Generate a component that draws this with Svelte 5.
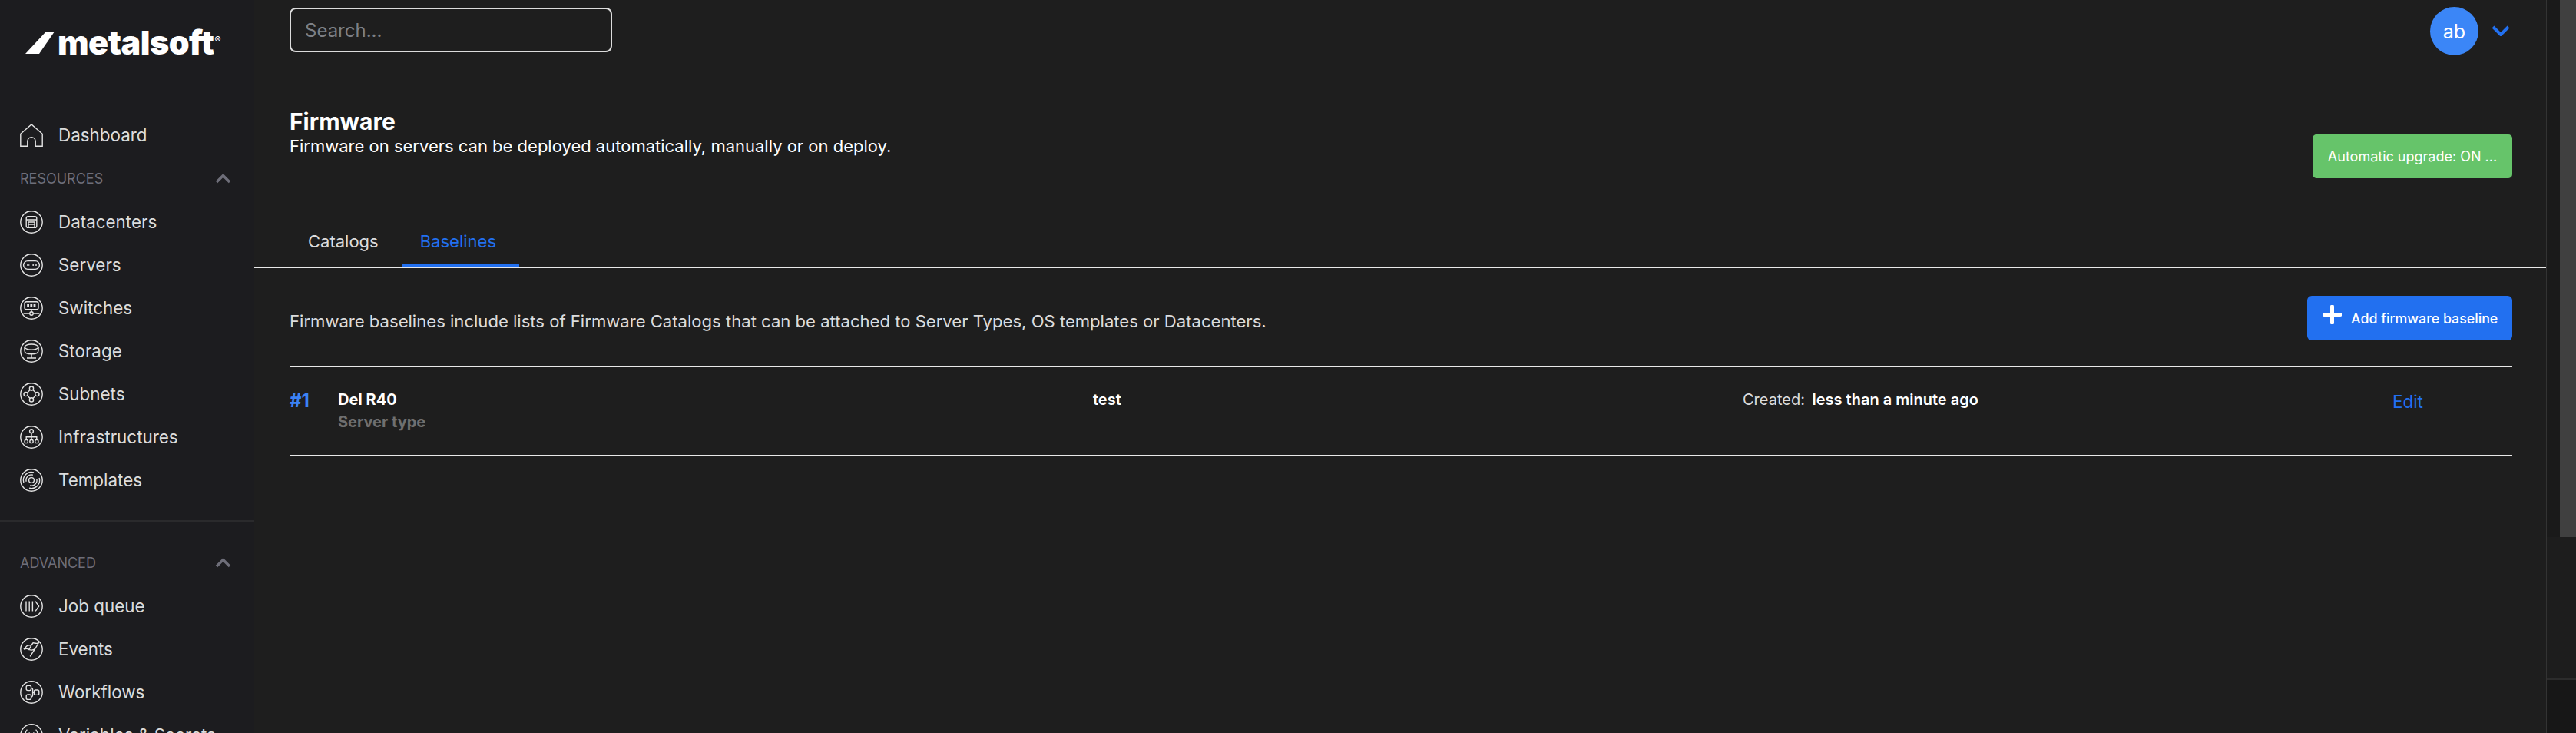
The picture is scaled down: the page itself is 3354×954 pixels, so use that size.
<script lang="ts">
	const resources = [
		{ label: "Datacenters", icon: "datacenter" },
		{ label: "Servers", icon: "server" },
		{ label: "Switches", icon: "switch" },
		{ label: "Storage", icon: "storage" },
		{ label: "Subnets", icon: "subnet" },
		{ label: "Infrastructures", icon: "infra" },
		{ label: "Templates", icon: "template" },
	];

	const advanced = [
		{ label: "Job queue", icon: "queue" },
		{ label: "Events", icon: "flag" },
		{ label: "Workflows", icon: "workflow" },
		{ label: "Variables & Secrets", icon: "variable" },
	];

	let activeTab = $state("Baselines");
</script>

{#snippet icon(name: string)}
	<svg class="nav-icon" viewBox="0 0 30 30" aria-hidden="true">
		{#if name === "home"}
			<path d="M.8 29.2V13.2L15 1l14.2 12.2v16h-9v-6.4a5.2 5.2 0 0 0-10.4 0v6.4z" />
		{:else}
			<circle cx="15" cy="15" r="14.2" />
			{#if name === "datacenter"}
				<rect x="8.2" y="7.8" width="13.6" height="14.6" rx="2.4" />
				<path d="M8.2 12h13.6M11 22v-7h8v7M11 18h8" />
			{:else if name === "server"}
				<rect x="4.6" y="9.6" width="20.8" height="10.8" rx="5.4" />
				<path d="M9 15h3.4" />
				<circle class="dot" cx="17.2" cy="15" r="1" />
				<circle class="dot" cx="21" cy="15" r="1" />
			{:else if name === "switch"}
				<rect x="6" y="6.8" width="18" height="10" rx="2.4" />
				<rect class="dot" x="9.2" y="10" width="2.8" height="3.4" />
				<rect class="dot" x="13.4" y="10" width="2.8" height="3.4" />
				<rect class="dot" x="17.6" y="10" width="2.8" height="3.4" />
				<path d="M15 16.8v3.4M4.6 22h8.2M17.2 22h8.2" />
				<circle cx="15" cy="22" r="2.2" />
			{:else if name === "storage"}
				<ellipse cx="15" cy="9.6" rx="9" ry="3.6" />
				<path d="M6 9.6v4.6c0 3 4 4.6 9 4.6s9-1.6 9-4.6V9.6M15 18.8v5M9 24h12" />
			{:else if name === "subnet"}
				<circle cx="15" cy="7.6" r="2.6" />
				<circle cx="15" cy="22.4" r="2.6" />
				<circle cx="7.6" cy="15" r="2.6" />
				<circle cx="22.4" cy="15" r="2.6" />
				<path d="M13.2 9.4l-3.8 3.8M16.8 9.4l3.8 3.8M13.2 20.6l-3.8-3.8M16.8 20.6l3.8-3.8" />
			{:else if name === "infra"}
				<circle cx="15" cy="7.2" r="2.4" />
				<circle cx="8.2" cy="20.4" r="2.2" />
				<circle cx="15" cy="20.4" r="2.2" />
				<circle cx="21.8" cy="20.4" r="2.2" />
				<path d="M15 9.6v8.6M8.2 18.2v-3.4h13.6v3.4" />
			{:else if name === "template"}
				<circle cx="15" cy="15" r="3.4" />
				<path d="M4.9 18A10.5 10.5 0 0 1 18 4.9M8.2 16.8A7 7 0 0 1 16.8 8.2M25.1 12A10.5 10.5 0 0 1 12 25.1M21.8 13.2A7 7 0 0 1 13.2 21.8" />
			{:else if name === "queue"}
				<path d="M8 8.6v12.8M12.2 8.6v12.8M16.4 8.6v12.8M20.2 8.6L24.6 15l-4.4 6.4" />
			{:else if name === "flag"}
				<path d="M13.2 24.4L20 14l4.2-7.2c-2.6 1.4-4.6.2-7-.2l-2.6 3.6c-2-.8-3.6-.6-5.4.4L5 15c2.4-.8 5-1 6.8.4l2.8-4.8M11.8 15.4c2.8 1.2 5.6 1 8.2-1.4" />
			{:else if name === "workflow"}
				<rect x="8.2" y="6.2" width="6.4" height="6.4" rx="2" />
				<rect x="8.2" y="18" width="6.4" height="6.4" rx="2" />
				<rect x="18.4" y="12" width="6.4" height="6.4" rx="2" />
				<path d="M14.6 9.4c1.4 0 2 1 2 2.4v6c0 2-1 3.4-2 3.4M16.6 15.2h1.8" />
			{:else if name === "variable"}
				<path d="M9.4 7.6c-3.4 3.8-3.4 11 0 14.8M20.6 7.6c3.4 3.8 3.4 11 0 14.8M11.6 11.4l6.8 7.2M18.4 11.4l-6.8 7.2" />
			{/if}
		{/if}
	</svg>
{/snippet}

{#snippet section(title: string, items: { label: string; icon: string }[])}
	<div class="nav-label">
		<span>{title}</span>
		<svg class="collapse" viewBox="0 0 21 13" aria-hidden="true">
			<path d="M2 11l8.5-8.5L19 11" />
		</svg>
	</div>
	{#each items as item}
		<a class="nav-item" href="#{item.icon}">
			{@render icon(item.icon)}
			<span>{item.label}</span>
		</a>
	{/each}
{/snippet}

<div class="shell">
	<aside class="sidebar">
		<div class="logo">
			<svg class="slash" viewBox="0 0 38 29" aria-hidden="true">
				<path d="M0 29L27 0h11L18 29z" />
			</svg>
			<span class="wordmark">metalsoft</span>
			<span class="reg">®</span>
		</div>

		<a class="nav-item" href="#dashboard">
			{@render icon("home")}
			<span>Dashboard</span>
		</a>

		{@render section("RESOURCES", resources)}
		<hr class="nav-divider" />
		{@render section("ADVANCED", advanced)}
	</aside>

	<main class="content">
		<header class="topbar">
			<input class="search" type="text" placeholder="Search..." />
			<div class="user">
				<span class="avatar">ab</span>
				<svg class="user-caret" viewBox="0 0 24 14" aria-hidden="true">
					<path d="M2 2l10 10L22 2" />
				</svg>
			</div>
		</header>

		<section class="page-head">
			<div>
				<h1>Firmware</h1>
				<p>Firmware on servers can be deployed automatically, manually or on deploy.</p>
			</div>
			<button type="button" class="auto-upgrade">Automatic upgrade: ON ...</button>
		</section>

		<nav class="tabs">
			{#each ["Catalogs", "Baselines"] as tab}
				<button
					type="button"
					class="tab"
					class:active={tab === activeTab}
					onclick={() => (activeTab = tab)}
				>
					{tab}
				</button>
			{/each}
		</nav>

		<section class="panel">
			<div class="panel-head">
				<p>Firmware baselines include lists of Firmware Catalogs that can be attached to Server Types, OS templates or Datacenters.</p>
				<button type="button" class="add">
					<svg viewBox="0 0 25 25" aria-hidden="true">
						<path d="M12.5 2v21M2 12.5h21" />
					</svg>
					Add firmware baseline
				</button>
			</div>

			<div class="row">
				<a class="row-id" href="#1">#1</a>
				<div class="row-name">
					<strong>Del R40</strong>
					<span>Server type</span>
				</div>
				<div class="row-desc">test</div>
				<div class="row-created">Created: <strong>less than a minute ago</strong></div>
				<a class="row-edit" href="#edit">Edit</a>
			</div>
		</section>
	</main>

	<div class="rail">
		<div class="rail-top">
			<div class="scroll-thumb"></div>
		</div>
		<div class="rail-track"></div>
		<div class="rail-corner"></div>
	</div>
</div>

<style>
	:global(body) {
		margin: 0;
		background: #1e1e1e;
	}

	.shell {
		display: flex;
		height: 954px;
		overflow: hidden;
		font-family: Inter, "Liberation Sans", sans-serif;
		color: #e6e6e6;
	}

	.sidebar {
		flex: 0 0 331px;
		height: 954px;
		overflow: hidden;
		background: #1c1c1f;
	}

	.logo {
		display: flex;
		align-items: flex-start;
		height: 148px;
		padding: 24px 0 0 33px;
		box-sizing: border-box;
		color: #fff;
	}

	.slash {
		width: 38px;
		height: 29px;
		margin: 17px 4px 0 0;
		fill: #fff;
		flex: none;
	}

	.wordmark {
		font-size: 43px;
		font-weight: 900;
		line-height: 52px;
		letter-spacing: -0.5px;
		margin-top: 5px;
	}

	.reg {
		font-size: 12px;
		font-weight: 700;
		line-height: 12px;
		margin: 22px 0 0 1px;
	}

	.nav-item {
		display: flex;
		align-items: center;
		gap: 20px;
		height: 56px;
		padding-left: 26px;
		color: #dcdcdc;
		font-size: 22.4px;
		text-decoration: none;
		white-space: nowrap;
	}

	.nav-item span {
		margin-top: -2px;
	}

	.nav-icon {
		width: 30px;
		height: 30px;
		flex: none;
		fill: none;
		stroke: #e4e4e4;
		stroke-width: 1.4;
	}

	.nav-icon .dot {
		fill: #e4e4e4;
		stroke: none;
	}

	.nav-label {
		display: flex;
		align-items: center;
		justify-content: space-between;
		height: 57px;
		padding: 0 30px 0 26px;
		color: #6e6e79;
		font-size: 18px;
	}

	.collapse {
		width: 21px;
		height: 13px;
		fill: none;
		stroke: #6e6e79;
		stroke-width: 3.4;
	}

	.nav-divider {
		height: 2px;
		margin: 24px 0 25px;
		border: 0;
		background: #2a2a2c;
	}

	.content {
		flex: 1;
		min-width: 0;
		border-right: 1px solid #333;
		background: #1e1e1e;
	}

	.topbar {
		display: flex;
		align-items: flex-start;
		justify-content: space-between;
		height: 140px;
		padding: 10px 47px 0 46px;
		box-sizing: border-box;
	}

	.search {
		width: 420px;
		height: 58px;
		padding: 0 18px;
		box-sizing: border-box;
		border: 2px solid #dcdcdc;
		border-radius: 8px;
		background: transparent;
		color: #fff;
		font: 24px Inter, sans-serif;
	}

	.search::placeholder {
		color: #7d8086;
	}

	.user {
		display: flex;
		align-items: flex-start;
		gap: 17px;
	}

	.avatar {
		display: grid;
		place-items: center;
		width: 63px;
		height: 63px;
		margin-top: -1px;
		border-radius: 50%;
		background: #3b86f7;
		color: #fff;
		font-size: 25px;
	}

	.user-caret {
		width: 24px;
		height: 14px;
		margin-top: 23px;
		fill: none;
		stroke: #2270f0;
		stroke-width: 4;
	}

	.page-head {
		display: flex;
		align-items: flex-start;
		justify-content: space-between;
		height: 143px;
		padding: 0 44px 0 46px;
		box-sizing: border-box;
	}

	.page-head h1 {
		margin: 0;
		color: #fff;
		font-size: 30px;
		font-weight: 700;
		line-height: 36px;
	}

	.page-head p {
		margin: 0;
		color: #fff;
		font-size: 22px;
		line-height: 28px;
	}

	.auto-upgrade {
		width: 260px;
		height: 57px;
		margin-top: 35px;
		border: 0;
		border-radius: 5px;
		background: #66c46a;
		color: #fff;
		font: 18px Inter, sans-serif;
		white-space: nowrap;
	}

	.tabs {
		display: flex;
		align-items: flex-end;
		height: 66px;
		padding-left: 46px;
		box-sizing: border-box;
		border-bottom: 2px solid #e8e8e8;
	}

	.tab {
		height: 64px;
		margin-bottom: -1px;
		padding: 0 30px 0 24px;
		border: 0;
		border-bottom: 4px solid transparent;
		background: transparent;
		color: #dcdcdc;
		font: 22px Inter, sans-serif;
		cursor: pointer;
	}

	.tab.active {
		border-bottom-color: #2270f0;
		color: #2270f0;
	}

	.panel {
		padding: 36px 44px 0 46px;
	}

	.panel-head {
		display: flex;
		align-items: center;
		justify-content: space-between;
		margin-bottom: 33px;
	}

	.panel-head p {
		margin: 0;
		padding-top: 8px;
		color: #dcdcdc;
		font-size: 22.08px;
	}

	.add {
		display: flex;
		align-items: center;
		gap: 12px;
		width: 267px;
		height: 58px;
		padding: 0 20px;
		box-sizing: border-box;
		border: 0;
		border-radius: 6px;
		background: #2270f0;
		color: #fff;
		font: 500 17.8px Inter, sans-serif;
		white-space: nowrap;
	}

	.add svg {
		width: 25px;
		height: 25px;
		margin-top: -9px;
		flex: none;
		fill: none;
		stroke: #fff;
		stroke-width: 5;
		stroke-linecap: round;
	}

	.row {
		display: grid;
		grid-template-columns: 63px 983px 846px 846px 1fr;
		height: 118px;
		padding-top: 28px;
		box-sizing: border-box;
		border-top: 2px solid #e8e8e8;
		border-bottom: 2px solid #e8e8e8;
		font-size: 20px;
	}

	.row-id {
		color: #3b82f6;
		font-size: 24px;
		font-weight: 700;
		line-height: 32px;
		text-decoration: none;
	}

	.row-name {
		display: flex;
		flex-direction: column;
		line-height: 29px;
	}

	.row-name strong {
		color: #fff;
		font-weight: 700;
	}

	.row-name span {
		color: #6f6f6f;
		font-weight: 700;
	}

	.row-desc {
		color: #fff;
		font-weight: 600;
		line-height: 29px;
	}

	.row-created {
		color: #dcdcdc;
		line-height: 29px;
		white-space: nowrap;
	}

	.row-created strong {
		margin-left: 4px;
		color: #fff;
		font-weight: 600;
	}

	.row-edit {
		color: #2270f0;
		font-size: 22.4px;
		line-height: 34px;
		text-decoration: none;
	}

	.rail {
		display: flex;
		flex-direction: column;
		flex: 0 0 38px;
		height: 954px;
		background: #1d1d1d;
	}

	.rail-top {
		display: flex;
		justify-content: flex-end;
		height: 699px;
		background: #1a1a1a;
	}

	.scroll-thumb {
		width: 21px;
		background: #404040;
	}

	.rail-track {
		flex: 1;
	}

	.rail-corner {
		height: 71px;
		box-sizing: border-box;
		border-top: 2px solid #2c2c2c;
		background: #171717;
	}
</style>
